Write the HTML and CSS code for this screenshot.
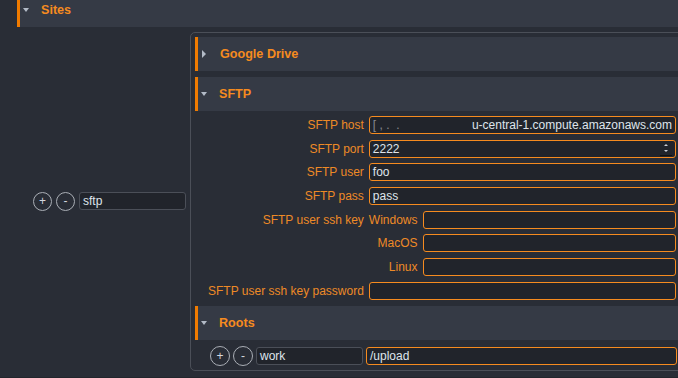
FILE: index.html
```html
<!DOCTYPE html>
<html lang="en">
<head>
<meta charset="UTF-8" />
<title>Sites</title>
<link rel="stylesheet" href="styles.css">
</head>
<body>
<div class="page">
    <div class="sec-head"><span class="tri down"></span>Sites</div>

    <div class="entry">
        <div class="key-col">
            <button class="circle">+</button>
            <button class="circle">-</button>
            <div class="field plain key">sftp</div>
        </div>

        <div class="box">
            <div class="sec-head"><span class="tri right"></span>Google Drive</div>
            <div class="sec-head gap"><span class="tri down"></span>SFTP</div>

            <div class="form">
                <label>SFTP host</label>
                <div class="field host"><span class="smudge">[ , .&nbsp;&nbsp;.</span><span>u-central-1.compute.amazonaws.com</span></div>

                <label>SFTP port</label>
                <div class="field spin">2222<span class="spinner"><i class="up"></i><i class="dn"></i></span></div>

                <label>SFTP user</label>
                <div class="field">foo</div>

                <label>SFTP pass</label>
                <div class="field">pass</div>

                <label class="top">SFTP user ssh key</label>
                <div class="sub">
                    <label>Windows</label>
                    <div class="field"></div>
                    <label>MacOS</label>
                    <div class="field"></div>
                    <label>Linux</label>
                    <div class="field"></div>
                </div>

                <label>SFTP user ssh key password</label>
                <div class="field"></div>
            </div>

            <div class="sec-head"><span class="tri down"></span>Roots</div>
            <div class="roots-row">
                <button class="circle big">+</button>
                <button class="circle big">-</button>
                <div class="field plain key">work</div>
                <div class="field grow">/upload</div>
            </div>
        </div>
    </div>
</div>
<div class="foot"></div>
</body>
</html>
```

FILE: styles.css
```css
:root {
    --bg: #292d36;
    --head: #353a45;
    --orange: #f68b1f;
    --label: #ee8a26;
    --bar: #f07b00;
    --field-bg: #21242b;
    --line: #4b4f58;
    --text: #dfe4eb;
}
* {
    box-sizing: border-box;
    margin: 0;
    padding: 0;
}
body {
    background: var(--bg);
    font-family: "Liberation Sans", Arial, sans-serif;
    font-size: 12px;
    overflow: hidden;
    height: 378px;
}
.page {
    width: 685px;
    margin-top: -7px;
    padding: 0 0 6px 17px;
}
/* collapsible section header */
.sec-head {
    height: 34px;
    display: flex;
    align-items: center;
    background: var(--head);
    border-left: 3px solid var(--bar);
    color: var(--orange);
    font-size: 12.6px;
    font-weight: 700;
    padding-left: 3px;
}
.sec-head.gap {
    margin-top: 6px;
}
.tri {
    width: 0;
    height: 0;
}
.tri.down {
    border-left: 3.5px solid transparent;
    border-right: 3.5px solid transparent;
    border-top: 4px solid #b3bbc7;
    margin-right: 12px;
}
.tri.right {
    border-top: 4px solid transparent;
    border-bottom: 4px solid transparent;
    border-left: 4px solid #b3bbc7;
    margin-left: 1px;
    margin-right: 14px;
}
.entry {
    display: flex;
    align-items: center;
    gap: 4px;
    margin-top: 5px;
    padding-left: 16px;
}
.key-col {
    display: flex;
    align-items: center;
    gap: 4px;
}
.circle {
    width: 19px;
    height: 19px;
    border-radius: 50%;
    border: 1px solid #a9aeb5;
    background: transparent;
    color: #d3d7dd;
    font-family: "Liberation Sans", Arial, sans-serif;
    font-size: 12px;
    line-height: 16px;
    text-align: center;
}
.circle.big {
    width: 20px;
    height: 20px;
}
.box {
    flex: 1;
    border: 1px solid var(--line);
    border-radius: 5px;
    padding: 4px;
}
.field {
    height: 18px;
    background: var(--field-bg);
    border: 1px solid var(--orange);
    border-radius: 3px;
    color: var(--text);
    padding-left: 3px;
    line-height: 16px;
    white-space: nowrap;
    overflow: hidden;
}
.field.plain {
    border-color: var(--line);
}
.field.key {
    width: 107px;
}
.field.host {
    display: flex;
    justify-content: space-between;
    padding-right: 3px;
}
.smudge {
    color: #c8ccd2;
    opacity: 0.6;
}
.field.spin {
    position: relative;
}
.spinner {
    position: absolute;
    right: 3px;
    top: 1px;
    width: 12px;
    height: 14px;
    display: flex;
    flex-direction: column;
    align-items: center;
    justify-content: space-around;
    border-bottom: 1px solid #111;
}
.spinner i {
    width: 0;
    height: 0;
    border-left: 2px solid transparent;
    border-right: 2px solid transparent;
}
.spinner .up {
    border-bottom: 2px solid #c9ced6;
}
.spinner .dn {
    border-top: 2px solid #c9ced6;
}
.form {
    display: grid;
    grid-template-columns: auto 1fr;
    column-gap: 5px;
    row-gap: 5.7px;
    padding: 5px 4px 6px 13px;
}
.form label {
    color: var(--label);
    justify-self: end;
    line-height: 18px;
}
.form label.top {
    align-self: start;
}
.sub {
    display: grid;
    grid-template-columns: auto 1fr;
    column-gap: 5px;
    row-gap: 5.7px;
}
.roots-row {
    display: flex;
    align-items: center;
    gap: 3px;
    margin-top: 6px;
    padding: 0 3px 0 15px;
}
.field.grow {
    flex: 1;
}
.foot {
    height: 4px;
    background: #22252c;
}
```
